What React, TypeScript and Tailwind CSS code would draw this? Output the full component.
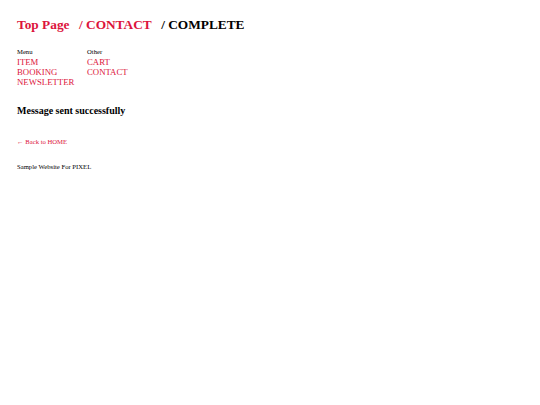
export default function App() {
  const serif = { fontFamily: '"Liberation Serif", "Times New Roman", serif' };
  return (
    <div className="min-h-[405px] w-full bg-white pl-[17px] pt-[17px] text-black" style={serif}>
      <h1 className="flex gap-[9.5px] text-[13.33px] font-bold leading-[16px]">
        <a className="text-[#dc143c]">Top Page</a>
        <a className="text-[#dc143c]">/ CONTACT</a>
        <span>/ COMPLETE</span>
      </h1>
      <nav className="mt-[15px] flex">
        <div className="w-[70px]">
          <div className="text-[6.67px] leading-[8px]">Menu</div>
          <ul className="mt-[1px] text-[8.75px] leading-[10px] text-[#dc143c]">
            <li>ITEM</li>
            <li>BOOKING</li>
            <li>NEWSLETTER</li>
          </ul>
        </div>
        <div className="w-[70px]">
          <div className="text-[6.67px] leading-[8px]">Other</div>
          <ul className="mt-[1px] text-[8.75px] leading-[10px] text-[#dc143c]">
            <li>CART</li>
            <li>CONTACT</li>
          </ul>
        </div>
      </nav>
      <h2 className="mt-[18px] text-[10px] font-bold leading-[12px]">Message sent successfully</h2>
      <a className="mt-[21px] block text-[6.67px] leading-[8px] text-[#dc143c]">← Back to HOME</a>
      <footer className="mt-[17px] text-[6.67px] leading-[8px]">Sample Website For PIXEL</footer>
    </div>
  );
}
